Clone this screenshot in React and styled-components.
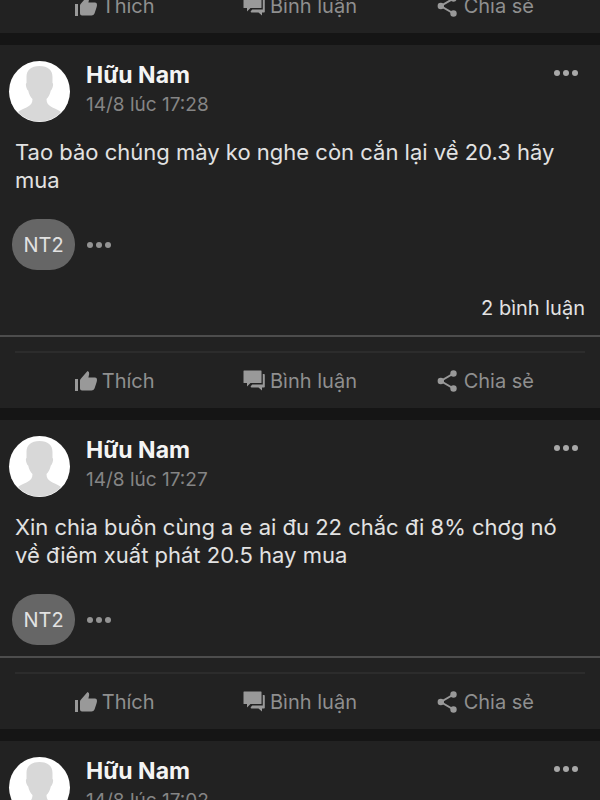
import styled, { createGlobalStyle } from 'styled-components'

const GlobalStyle = createGlobalStyle`
  * {
    box-sizing: border-box;
  }

  body {
    margin: 0;
    background: #222222;
    font-family: Inter, "Liberation Sans", sans-serif;
  }

  button {
    padding: 0;
    border: 0;
    background: none;
    font: inherit;
    cursor: pointer;
  }
`;

const Feed = styled.main`
  display: flex;
  flex-direction: column;
  gap: 12px;
  height: 100vh;
  overflow: hidden;
  background: #151515;
`;

const Post = styled.article`
  flex-shrink: 0;
  background: #222222;
`;

// the post that is scrolled almost out of view, only its bottom shows
const PostEnd = styled(Post)`
  display: flex;
  flex-direction: column;
  justify-content: flex-end;
  height: 33px;
  overflow: hidden;
`;

const Header = styled.header`
  display: flex;
  align-items: flex-start;
  padding: 15px 22px 0 8px;
`;

const Avatar = styled.svg`
  flex-shrink: 0;
  width: 62px;
  height: 62px;
`;

const Author = styled.div`
  flex: 1;
  padding-left: 16px;
`;

const Name = styled.h2`
  margin: 0;
  color: #f4f4f4;
  font-size: 23px;
  font-weight: 700;
  line-height: 30px;
`;

const Time = styled.time`
  display: block;
  color: #858585;
  font-size: 19px;
  line-height: 30px;
`;

const DotsButton = styled.button`
  display: flex;
  gap: 3px;
  padding: 10px 0;

  i {
    width: 6px;
    height: 6px;
    border-radius: 50%;
    background: ${(props) => props.$color || '#a8a8a8'};
  }
`;

const Text = styled.p`
  margin: 0;
  padding: 16px 15px 0;
  color: #e2e2e2;
  font-size: 22px;
  line-height: 28px;
`;

const Tags = styled.div`
  display: flex;
  align-items: center;
  gap: 12px;
  padding: 25px 12px 11px;
`;

const Tag = styled.button`
  width: 63px;
  height: 51px;
  border-radius: 25px;
  color: #e2e2e2;
  && {
    background: #666666;
    font-size: 20px;
  }
`;

const Count = styled.div`
  padding: 13px 15px;
  color: #e2e2e2;
  font-size: 20px;
  line-height: 28px;
  text-align: right;
`;

const Line = styled.hr`
  height: 2px;
  margin: 0;
  border: 0;
  background: #4d4d4d;
`;

const ActionBar = styled.div`
  flex-shrink: 0;
  display: grid;
  grid-template-columns: repeat(3, 1fr);
  height: 57px;
  margin: 0 15px;
  padding: 0 7px;
  border-top: 2px solid #2c2c2c;
`;

const Footer = styled.footer`
  padding-top: 14px;
`;

const Action = styled.button`
  display: flex;
  align-items: center;
  justify-content: center;
  gap: 5px;
  color: #8f8f8f;
  && {
    font-size: 20px;
  }

  svg {
    width: 22px;
    height: 22px;
    fill: #999999;
  }
`;

function Dots({ label, color }) {
  return (
    <DotsButton aria-label={label} $color={color}>
      <i /><i /><i />
    </DotsButton>
  )
}

function Actions() {
  return (
    <ActionBar>
      <Action>
        <svg viewBox="0 0 22 22">
          <path d="M0 9h3v12H0z" />
          <path d="M5 10.500 Q5 9.500 6 8.500 L12.500 1 Q14.500 1.500 14.200 4 L13.400 7.500 H20 Q22 7.500 22 9.700 Q22 11 21.500 12.500 L19.500 18.500 Q18.700 20.500 16.500 20.500 H7 Q5 20.500 5 18.500z" />
        </svg>
        Thích
      </Action>
      <Action>
        <svg viewBox="0 0 22 22">
          <path d="M1 .500h17q.500 0 .500.500v11.500q0 .500-.500.500H7.500L4 16.500V13H1q-.500 0-.500-.500V1q0-.500.500-.500z" />
          <path d="M19.800 4H21q.800 0 .800.800v12q0 .800-.800.800h-2V20.500L15.500 17.600H8.500q-.800 0-.800-.800v-.600l1.600-1.800h10.500z" />
        </svg>
        Bình luận
      </Action>
      <Action>
        <svg viewBox="0 0 22 22">
          <path d="M16.500 3.500 3.800 11l12.700 7.500" fill="none" stroke="#999999" strokeWidth="2" />
          <circle cx="16.500" cy="3.500" r="3.200" />
          <circle cx="3.800" cy="11" r="3.200" />
          <circle cx="16.500" cy="18.500" r="3.200" />
        </svg>
        Chia sẻ
      </Action>
    </ActionBar>
  )
}

function FeedPost({ name, time, text, tag, comments }) {
  return (
    <Post>
      <Header>
        <Avatar viewBox="0 0 62 62" aria-hidden="true">
          <clipPath id="round"><circle cx="31.500" cy="31.500" r="30" /></clipPath>
          <circle cx="31.500" cy="31.500" r="30.500" fill="#ffffff" />
          <g clipPath="url(#round)">
            <path d="M31.500 6C23 6 18.500 10 18.500 17v6c-1.500.500 0 6.500 1.700 7.500C21 34.500 22.500 37 24.500 39c0 8-7 8-14 12.500V62h42V51.500C45.500 47 38.500 47 38.500 39c2-2 3.500-4.500 4.300-8.500 1.700-1 3.200-7 1.700-7.500v-6C44.500 10 40 6 31.500 6z" fill="#d8d8d8" />
          </g>
        </Avatar>
        <Author>
          <Name>{name}</Name>
          <Time>{time}</Time>
        </Author>
        <Dots label="Tùy chọn" />
      </Header>
      <Text>{text}</Text>
      <Tags>
        <Tag>{tag}</Tag>
        <Dots label="Thêm" color="#939393" />
      </Tags>
      {comments && <Count>{comments}</Count>}
      <Line />
      <Footer>
        <Actions />
      </Footer>
    </Post>
  )
}

function App() {

  const posts = [
    {
      name: "Hữu Nam",
      time: "14/8 lúc 17:28",
      text: "Tao bảo chúng mày ko nghe còn cắn lại về 20.3 hãy mua",
      tag: "NT2",
      comments: "2 bình luận",
    },
    {
      name: "Hữu Nam",
      time: "14/8 lúc 17:27",
      text: "Xin chia buồn cùng a e ai đu 22 chắc đi 8% chơg nó về điêm xuất phát 20.5 hay mua",
      tag: "NT2",
    },
    {
      name: "Hữu Nam",
      time: "14/8 lúc 17:02",
      text: "",
      tag: "NT2",
    },
  ]

  return (
    <>
      <GlobalStyle />
      <Feed>
        <PostEnd>
          <Actions />
        </PostEnd>
        {posts.map((post) => <FeedPost key={post.time} {...post} />)}
      </Feed>
    </>
  )
}

export default App
